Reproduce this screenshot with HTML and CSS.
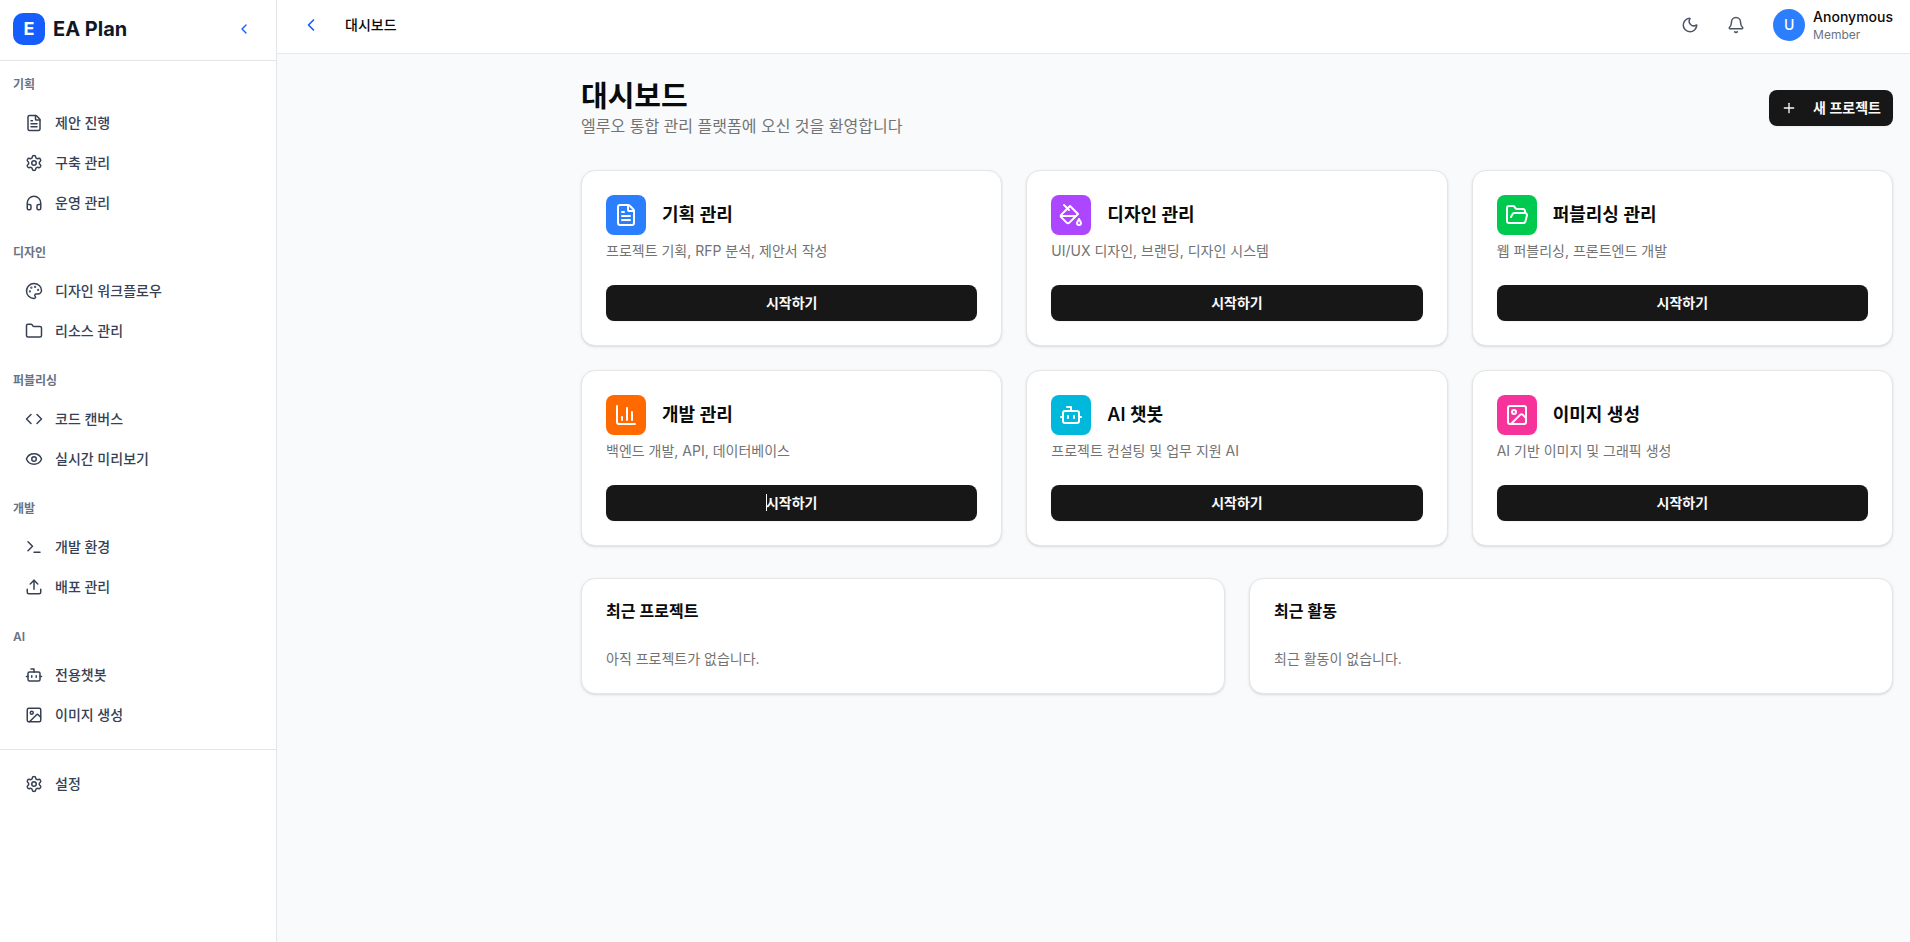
FILE: index.html
```html
<!DOCTYPE html>
<html lang="ko">
<head>
<meta charset="utf-8">
<meta name="viewport" content="width=device-width, initial-scale=1">
<title>EA Plan - 대시보드</title>
<link rel="stylesheet" href="styles.css">
</head>
<body>
<svg class="sprite" aria-hidden="true">
  <symbol id="i-file" viewBox="0 0 24 24"><path d="M6 22a2 2 0 0 1-2-2V4a2 2 0 0 1 2-2h8a2.4 2.4 0 0 1 1.704.706l3.588 3.588A2.4 2.4 0 0 1 20 8v12a2 2 0 0 1-2 2z"/><path d="M14 2v5a1 1 0 0 0 1 1h5"/><path d="M10 9H8"/><path d="M16 13H8"/><path d="M16 17H8"/></symbol>
  <symbol id="i-gear" viewBox="0 0 24 24"><path d="M9.671 4.136a2.34 2.34 0 0 1 4.659 0 2.34 2.34 0 0 0 3.319 1.915 2.34 2.34 0 0 1 2.33 4.033 2.34 2.34 0 0 0 0 3.831 2.34 2.34 0 0 1-2.33 4.033 2.34 2.34 0 0 0-3.319 1.915 2.34 2.34 0 0 1-4.659 0 2.34 2.34 0 0 0-3.32-1.915 2.34 2.34 0 0 1-2.33-4.033 2.34 2.34 0 0 0 0-3.831A2.34 2.34 0 0 1 6.35 6.051a2.34 2.34 0 0 0 3.319-1.915"/><circle cx="12" cy="12" r="3"/></symbol>
  <symbol id="i-headphones" viewBox="0 0 24 24"><path d="M3 14h3a2 2 0 0 1 2 2v3a2 2 0 0 1-2 2H5a2 2 0 0 1-2-2v-7a9 9 0 0 1 18 0v7a2 2 0 0 1-2 2h-1a2 2 0 0 1-2-2v-3a2 2 0 0 1 2-2h3"/></symbol>
  <symbol id="i-palette" viewBox="0 0 24 24"><path d="M12 22a1 1 0 0 1 0-20 10 9 0 0 1 10 9 5 5 0 0 1-5 5h-2.25a1.75 1.75 0 0 0-1.4 2.8l.3.4a1.75 1.75 0 0 1-1.4 2.8z"/><g class="dot"><circle cx="13.5" cy="6.5" r=".5"/><circle cx="17.5" cy="10.5" r=".5"/><circle cx="6.5" cy="12.5" r=".5"/><circle cx="8.5" cy="7.5" r=".5"/></g></symbol>
  <symbol id="i-folder" viewBox="0 0 24 24"><path d="M20 20a2 2 0 0 0 2-2V8a2 2 0 0 0-2-2h-7.9a2 2 0 0 1-1.69-.9L9.6 3.9A2 2 0 0 0 7.93 3H4a2 2 0 0 0-2 2v13a2 2 0 0 0 2 2Z"/></symbol>
  <symbol id="i-code" viewBox="0 0 24 24"><path d="m16 18 6-6-6-6"/><path d="m8 6-6 6 6 6"/></symbol>
  <symbol id="i-eye" viewBox="0 0 24 24"><path d="M2.062 12.348a1 1 0 0 1 0-.696 10.75 10.75 0 0 1 19.876 0 1 1 0 0 1 0 .696 10.75 10.75 0 0 1-19.876 0"/><circle cx="12" cy="12" r="3"/></symbol>
  <symbol id="i-terminal" viewBox="0 0 24 24"><path d="M12 19h8"/><path d="m4 17 6-6-6-6"/></symbol>
  <symbol id="i-upload" viewBox="0 0 24 24"><path d="M12 3v12"/><path d="m17 8-5-5-5 5"/><path d="M21 15v4a2 2 0 0 1-2 2H5a2 2 0 0 1-2-2v-4"/></symbol>
  <symbol id="i-bot" viewBox="0 0 24 24"><path d="M12 8V4H8"/><rect width="16" height="12" x="4" y="8" rx="2"/><path d="M2 14h2"/><path d="M20 14h2"/><path d="M15 13v2"/><path d="M9 13v2"/></symbol>
  <symbol id="i-image" viewBox="0 0 24 24"><rect width="18" height="18" x="3" y="3" rx="2"/><circle cx="9" cy="9" r="2"/><path d="m21 15-3.086-3.086a2 2 0 0 0-2.828 0L6 21"/></symbol>
  <symbol id="i-left" viewBox="0 0 24 24"><path d="m15 18-6-6 6-6"/></symbol>
  <symbol id="i-moon" viewBox="0 0 24 24"><path d="M20.985 12.486a9 9 0 1 1-9.473-9.472c.405-.022.617.46.402.803a6 6 0 0 0 8.268 8.268c.344-.215.825-.004.803.401"/></symbol>
  <symbol id="i-bell" viewBox="0 0 24 24"><path d="M10.268 21a2 2 0 0 0 3.464 0"/><path d="M3.262 15.326A1 1 0 0 0 4 17h16a1 1 0 0 0 .74-1.673C19.41 13.956 18 12.499 18 8A6 6 0 0 0 6 8c0 4.499-1.411 5.956-2.738 7.326"/></symbol>
  <symbol id="i-plus" viewBox="0 0 24 24"><path d="M5 12h14"/><path d="M12 5v14"/></symbol>
  <symbol id="i-bucket" viewBox="0 0 24 24"><path d="m19 11-8-8-8.6 8.6a2 2 0 0 0 0 2.8l5.2 5.2c.8.8 2 .8 2.8 0L19 11Z"/><path d="m5 2 5 5"/><path d="M2 13h15"/><path d="M22 20a2 2 0 1 1-4 0c0-1.6 1.7-2.4 2-4 .3 1.6 2 2.4 2 4Z"/></symbol>
  <symbol id="i-folder-open" viewBox="0 0 24 24"><path d="m6 14 1.5-2.9A2 2 0 0 1 9.24 10H20a2 2 0 0 1 1.94 2.5l-1.54 6a2 2 0 0 1-1.95 1.5H4a2 2 0 0 1-2-2V5a2 2 0 0 1 2-2h3.9a2 2 0 0 1 1.69.9l.81 1.2a2 2 0 0 0 1.67.9H18a2 2 0 0 1 2 2v2"/></symbol>
  <symbol id="i-chart" viewBox="0 0 24 24"><path d="M3 3v16a2 2 0 0 0 2 2h16"/><path d="M18 17V9"/><path d="M13 17V5"/><path d="M8 17v-3"/></symbol>
</svg>

<div class="app">
  <aside class="sidebar">
    <div class="brand">
      <span class="brand-mark">E</span>
      <span class="brand-name">EA Plan</span>
      <button class="icon-button brand-toggle" type="button" aria-label="사이드바 접기"><svg class="icon icon-sm"><use href="#i-left"/></svg></button>
    </div>
    <nav class="nav">
      <section class="nav-group">
        <h2 class="nav-label">기획</h2>
        <a class="nav-item" href="#"><svg class="icon"><use href="#i-file"/></svg>제안 진행</a>
        <a class="nav-item" href="#"><svg class="icon"><use href="#i-gear"/></svg>구축 관리</a>
        <a class="nav-item" href="#"><svg class="icon"><use href="#i-headphones"/></svg>운영 관리</a>
      </section>
      <section class="nav-group">
        <h2 class="nav-label">디자인</h2>
        <a class="nav-item" href="#"><svg class="icon"><use href="#i-palette"/></svg>디자인 워크플로우</a>
        <a class="nav-item" href="#"><svg class="icon"><use href="#i-folder"/></svg>리소스 관리</a>
      </section>
      <section class="nav-group">
        <h2 class="nav-label">퍼블리싱</h2>
        <a class="nav-item" href="#"><svg class="icon"><use href="#i-code"/></svg>코드 캔버스</a>
        <a class="nav-item" href="#"><svg class="icon"><use href="#i-eye"/></svg>실시간 미리보기</a>
      </section>
      <section class="nav-group">
        <h2 class="nav-label">개발</h2>
        <a class="nav-item" href="#"><svg class="icon"><use href="#i-terminal"/></svg>개발 환경</a>
        <a class="nav-item" href="#"><svg class="icon"><use href="#i-upload"/></svg>배포 관리</a>
      </section>
      <section class="nav-group">
        <h2 class="nav-label">AI</h2>
        <a class="nav-item" href="#"><svg class="icon"><use href="#i-bot"/></svg>전용챗봇</a>
        <a class="nav-item" href="#"><svg class="icon"><use href="#i-image"/></svg>이미지 생성</a>
      </section>
    </nav>
    <div class="sidebar-footer">
      <a class="nav-item" href="#"><svg class="icon"><use href="#i-gear"/></svg>설정</a>
    </div>
  </aside>

  <div class="content">
    <header class="topbar">
      <button class="icon-button back" type="button" aria-label="뒤로"><svg class="icon icon-md"><use href="#i-left"/></svg></button>
      <span class="crumb">대시보드</span>
      <div class="tools">
        <button class="icon-button" type="button" aria-label="다크 모드"><svg class="icon"><use href="#i-moon"/></svg></button>
        <button class="icon-button" type="button" aria-label="알림"><svg class="icon"><use href="#i-bell"/></svg></button>
      </div>
      <div class="user">
        <span class="avatar">U</span>
        <div class="user-text">
          <div class="user-name">Anonymous</div>
          <div class="user-role">Member</div>
        </div>
      </div>
    </header>

    <main class="main">
      <div class="page-head">
        <div>
          <h1 class="page-title">대시보드</h1>
          <p class="page-sub">엘루오 통합 관리 플랫폼에 오신 것을 환영합니다</p>
        </div>
        <button class="button button-new" type="button"><svg class="icon icon-sm"><use href="#i-plus"/></svg>새 프로젝트</button>
      </div>

      <div class="cards">
        <article class="card">
          <div class="card-head"><span class="tile blue"><svg class="icon icon-lg"><use href="#i-file"/></svg></span><h2 class="card-title">기획 관리</h2></div>
          <p class="card-text">프로젝트 기획, RFP 분석, 제안서 작성</p>
          <button class="button" type="button">시작하기</button>
        </article>
        <article class="card">
          <div class="card-head"><span class="tile purple"><svg class="icon icon-lg"><use href="#i-bucket"/></svg></span><h2 class="card-title">디자인 관리</h2></div>
          <p class="card-text">UI/UX 디자인, 브랜딩, 디자인 시스템</p>
          <button class="button" type="button">시작하기</button>
        </article>
        <article class="card">
          <div class="card-head"><span class="tile green"><svg class="icon icon-lg"><use href="#i-folder-open"/></svg></span><h2 class="card-title">퍼블리싱 관리</h2></div>
          <p class="card-text">웹 퍼블리싱, 프론트엔드 개발</p>
          <button class="button" type="button">시작하기</button>
        </article>
        <article class="card">
          <div class="card-head"><span class="tile orange"><svg class="icon icon-lg"><use href="#i-chart"/></svg></span><h2 class="card-title">개발 관리</h2></div>
          <p class="card-text">백엔드 개발, API, 데이터베이스</p>
          <button class="button" type="button"><span class="caret">시작하기</span></button>
        </article>
        <article class="card">
          <div class="card-head"><span class="tile cyan"><svg class="icon icon-lg"><use href="#i-bot"/></svg></span><h2 class="card-title">AI 챗봇</h2></div>
          <p class="card-text">프로젝트 컨설팅 및 업무 지원 AI</p>
          <button class="button" type="button">시작하기</button>
        </article>
        <article class="card">
          <div class="card-head"><span class="tile pink"><svg class="icon icon-lg"><use href="#i-image"/></svg></span><h2 class="card-title">이미지 생성</h2></div>
          <p class="card-text">AI 기반 이미지 및 그래픽 생성</p>
          <button class="button" type="button">시작하기</button>
        </article>
      </div>

      <div class="recents">
        <section class="card">
          <h2 class="recent-title">최근 프로젝트</h2>
          <p class="recent-text">아직 프로젝트가 없습니다.</p>
        </section>
        <section class="card">
          <h2 class="recent-title">최근 활동</h2>
          <p class="recent-text">최근 활동이 없습니다.</p>
        </section>
      </div>
    </main>
  </div>
</div>
</body>
</html>
```

FILE: styles.css
```css
*, *::before, *::after { box-sizing: border-box; }

body {
  margin: 0;
  background: #f9fafb;
  color: #0a0a0a;
  font-family: Inter, "Noto Sans CJK KR", sans-serif;
  font-size: 14px;
  line-height: 20px;
}

h1, h2, p { margin: 0; }
a { color: inherit; text-decoration: none; }
button { font: inherit; border: 0; padding: 0; cursor: pointer; }

.sprite { position: absolute; width: 0; height: 0; }

.icon {
  flex: none;
  width: 18px;
  height: 18px;
  fill: none;
  stroke: currentColor;
  stroke-width: 2;
  stroke-linecap: round;
  stroke-linejoin: round;
}
.icon-sm { width: 16px; height: 16px; }
.icon-md { width: 20px; height: 20px; }
.icon-lg { width: 24px; height: 24px; }
.dot { fill: currentColor; }

.app { display: flex; min-height: 100vh; }

/* Sidebar */
.sidebar {
  flex: none;
  width: 277px;
  background: #fff;
  border-right: 1px solid #e5e5e5;
}
.brand {
  display: flex;
  align-items: center;
  gap: 8px;
  padding: 13px 16px 15px 13px;
  border-bottom: 1px solid #e5e5e5;
}
.brand-mark {
  display: grid;
  place-items: center;
  width: 32px;
  height: 32px;
  border-radius: 10px;
  background: #155dfc;
  color: #fff;
  font-size: 18px;
  font-weight: 700;
}
.brand-name { color: #101828; font-size: 20px; font-weight: 700; line-height: 28px; }
.icon-button {
  display: grid;
  place-items: center;
  width: 34px;
  height: 34px;
  border-radius: 8px;
  background: transparent;
  color: #4a5565;
}
.brand-toggle { width: 32px; height: 32px; margin-left: auto; color: #155dfc; }

.nav { display: flex; flex-direction: column; gap: 24px; padding: 16px 13px; }
.nav-group { display: flex; flex-direction: column; gap: 4px; }
.nav-label {
  margin-bottom: 8px;
  color: #6a7282;
  font-size: 12px;
  font-weight: 600;
  line-height: 16px;
}
.nav-item {
  display: flex;
  align-items: center;
  gap: 12px;
  padding: 8px 12px;
  border-radius: 8px;
  color: #364153;
  font-weight: 500;
}
.sidebar-footer { padding: 16px 13px; border-top: 1px solid #e5e5e5; }

/* Top bar */
.content { flex: 1; min-width: 0; }
.topbar {
  display: flex;
  align-items: center;
  padding: 7px 17px 10px 16px;
  background: #fff;
  border-bottom: 1px solid #e5e7eb;
}
.back { width: 36px; height: 36px; color: #155dfc; }
.crumb { margin-left: 16px; color: #0a0a0a; font-weight: 500; }
.tools { display: flex; gap: 12px; margin-left: auto; }
.user { display: flex; align-items: center; gap: 8px; margin-left: 20px; }
.avatar {
  display: grid;
  place-items: center;
  width: 32px;
  height: 32px;
  border-radius: 50%;
  background: #2b7fff;
  color: #fff;
  font-weight: 500;
}
.user-name { color: #0a0a0a; font-weight: 500; }
.user-role { color: #6a7282; font-size: 12px; line-height: 16px; }

/* Page */
.main { padding: 24px 17px 24px 304px; }
.page-head {
  display: flex;
  align-items: center;
  justify-content: space-between;
  margin-bottom: 32px;
}
.page-title { font-size: 29px; font-weight: 700; line-height: 37px; }
.page-sub { color: #737373; font-size: 16px; line-height: 23px; }

.button {
  display: flex;
  align-items: center;
  justify-content: center;
  width: 100%;
  height: 36px;
  border-radius: 8px;
  background: #171717;
  color: #fafafa;
  font-weight: 600;
  box-shadow: 0 1px 2px rgba(0, 0, 0, 0.05);
}
.button-new { width: auto; gap: 16px; padding: 0 12px; }
.caret { position: relative; }
.caret::before {
  content: "";
  position: absolute;
  top: 1px;
  bottom: 2px;
  left: 0;
  width: 1px;
  background: #fafafa;
}

.cards { display: grid; grid-template-columns: repeat(3, 1fr); gap: 24px; }
.card {
  padding: 24px;
  border: 1px solid #e5e5e5;
  border-radius: 14px;
  background: #fff;
  box-shadow: 0 1px 3px rgba(0, 0, 0, 0.1), 0 1px 2px -1px rgba(0, 0, 0, 0.1);
}
.card-head { display: flex; align-items: center; gap: 16px; }
.tile {
  display: grid;
  place-items: center;
  width: 40px;
  height: 40px;
  border-radius: 8px;
  color: #fff;
}
.blue { background: #2b7fff; }
.purple { background: #ad46ff; }
.green { background: #00c950; }
.orange { background: #ff6900; }
.cyan { background: #00b8db; }
.pink { background: #f6339a; }
.card-title { font-size: 18px; font-weight: 600; line-height: 28px; }
.card-text { margin: 6px 0 24px; color: #737373; }

.recents { display: grid; grid-template-columns: repeat(2, 1fr); gap: 24px; margin-top: 32px; }
.recent-title { font-size: 16px; font-weight: 600; line-height: 16px; }
.recent-text { margin-top: 30px; color: #737373; }
```
